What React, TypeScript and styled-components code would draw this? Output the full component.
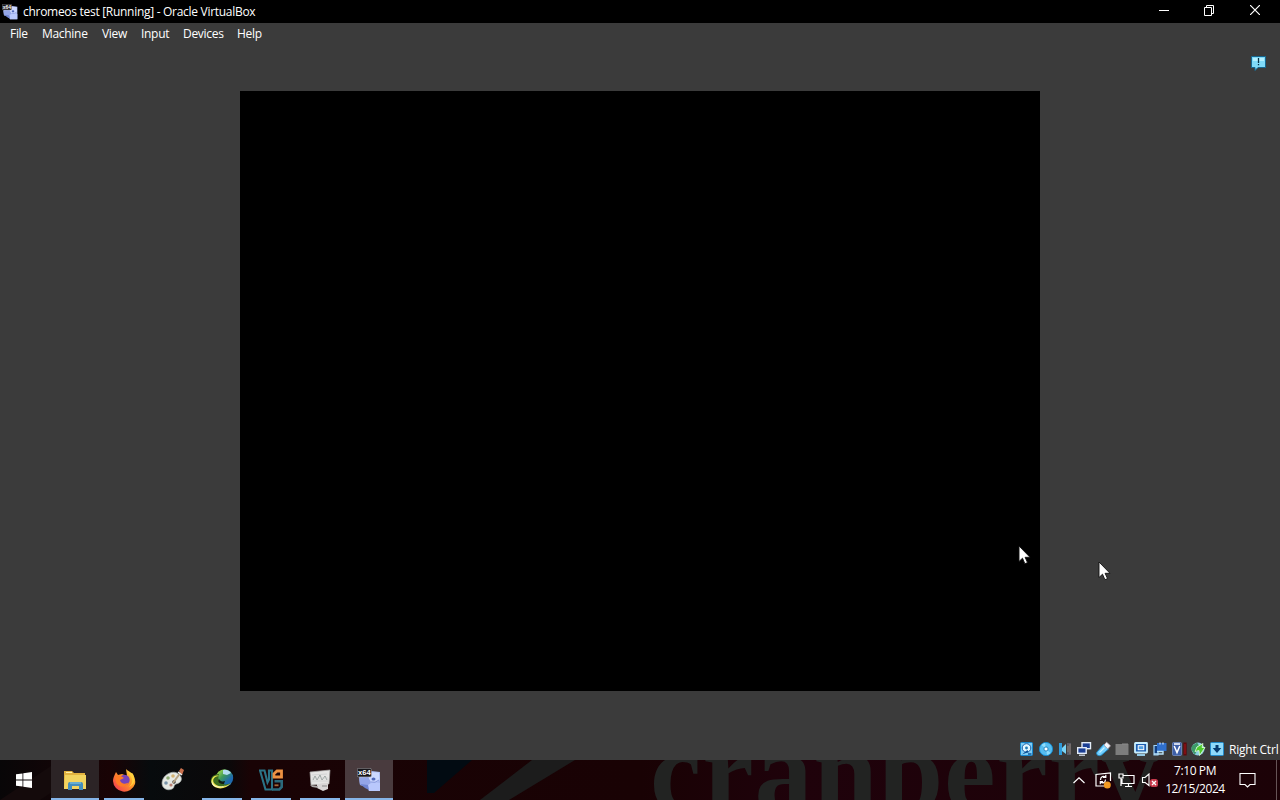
import type { ReactNode } from "react";
import styled, { createGlobalStyle } from "styled-components";

const GlobalStyle = createGlobalStyle`
  * {
    box-sizing: border-box;
  }
  body {
    margin: 0;
    background: #000;
    overflow: hidden;
  }
  svg {
    display: block;
    flex: none;
  }
`;

const Desktop = styled.div`
  position: relative;
  display: flex;
  flex-direction: column;
  width: 1280px;
  height: 800px;
  overflow: hidden;
  color: #fff;
  font-family: "Open Sans", "Noto Sans", sans-serif;
  font-size: 12px;
  user-select: none;
`;

const TitleBar = styled.header`
  display: flex;
  align-items: center;
  height: 23px;
  padding-left: 2px;
  background: #000;
`;

const Title = styled.div`
  flex: 1;
  margin-left: 5px;
  line-height: 23px;
  letter-spacing: -0.29px;
  white-space: nowrap;
`;

const WindowButtons = styled.div`
  display: flex;
  padding-right: 2px;
`;

const WindowButton = styled.div`
  display: flex;
  align-items: center;
  justify-content: center;
  width: 45.5px;
  height: 23px;
  padding-bottom: 3px;
`;

const MenuBar = styled.nav`
  display: flex;
  height: 22px;
  padding-left: 10px;
  background: #3b3b3b;
`;

const MenuItem = styled.div<{ $width: number }>`
  width: ${(p) => p.$width}px;
  line-height: 22px;
  letter-spacing: -0.3px;
  white-space: nowrap;
`;

const Machine = styled.main`
  display: flex;
  flex: 1;
  justify-content: center;
  padding-top: 46px;
  background: #3b3b3b;
`;

const Side = styled.div`
  display: flex;
  flex: 1;
  justify-content: flex-end;
  margin-top: -36px;
  padding-right: 13px;
`;

const Screen = styled.div`
  width: 800px;
  height: 600px;
  background: #000;
`;

const StatusBar = styled.footer`
  display: flex;
  align-items: center;
  justify-content: flex-end;
  gap: 3px;
  height: 22px;
  padding-bottom: 1px;
  background: #3b3b3b;
`;

const HostKey = styled.div`
  width: 51px;
  margin-left: 1px;
  padding-top: 2px;
  line-height: 22px;
  letter-spacing: -0.2px;
  white-space: nowrap;
`;

const Taskbar = styled.div`
  position: relative;
  display: flex;
  height: 40px;
  overflow: hidden;
  background: linear-gradient(90deg, #080607 0, #120507 60px, #190305 110px, #070b0d 150px, #0b0809 230px, #190305 250px, #190204 640px, #1f020b 800px, #1c0207 100%);
`;

const Wallpaper = styled.div`
  position: absolute;
  inset: 0;
`;

const WallpaperText = styled.div`
  position: absolute;
  top: -54px;
  left: 650px;
  color: #222322;
  font-family: "Liberation Serif", serif;
  font-size: 116px;
  font-weight: bold;
  line-height: 132px;
  letter-spacing: 0.8px;
`;

const Tasks = styled.div`
  position: relative;
  display: flex;
  flex: 1;
  gap: 1px;
`;

const StartButton = styled.div`
  display: flex;
  align-items: center;
  justify-content: center;
  width: 48px;
  height: 40px;
  margin-right: 2px;
`;

const taskFill = {
  none: "transparent",
  hover: "#2c2426",
  active: "#493b3e",
};

const Task = styled.div<{ $running?: boolean; $state?: "hover" | "active" }>`
  display: flex;
  align-items: center;
  justify-content: center;
  width: 48px;
  height: 40px;
  background-color: ${(p) => taskFill[p.$state ?? "none"]};
  background-image: ${(p) => (p.$running ? "linear-gradient(#86b5e8, #86b5e8)" : "none")};
  background-position: bottom center;
  background-repeat: no-repeat;
  background-size: ${(p) => (p.$state ? 48 : 40)}px 2px;
`;

const Tray = styled.div`
  position: relative;
  display: flex;
  align-items: center;
  width: 208px;
`;

const TraySlot = styled.div<{ $width: number }>`
  display: flex;
  justify-content: center;
  width: ${(p) => p.$width}px;
`;

const Clock = styled.div`
  width: 64px;
  line-height: 18px;
  letter-spacing: -0.4px;
  text-align: center;
  white-space: nowrap;
`;

const ShowDesktop = styled.div`
  width: 4px;
  height: 40px;
  border-left: 1px solid #665456;
`;

const Pointer = styled.svg<{ $x: number; $y: number }>`
  position: absolute;
  left: ${(p) => p.$x}px;
  top: ${(p) => p.$y}px;
`;

function VmLogo({ size }: { size: number }) {
  return (
    <svg width={size} height={size} viewBox="0 0 24 24">
      <path d="M2 8L15 3l8 1v19H12l-2-4-7-2z" fill="#a9b8ef" />
      <path d="M12 4l10 .5.5 8-6 3-5-2z" fill="#cdd8ff" />
      <path d="M2 10l9-1 3 5-3 4-8-1z" fill="#93a5e6" />
      <path d="M11 17l5-3 7 1v8H12z" fill="#b9c8fc" />
      <path d="M3 16l8 1 1 5-4-2z" fill="#6f84d0" />
      <ellipse cx="16.5" cy="11" rx="2" ry="1.6" fill="#4f66b8" />
      <path d="M14 14q4 1.5 8-2" fill="none" stroke="#8799dc" strokeWidth="1" />
      <rect x=".3" y=".3" width="14" height="8.6" rx="1.2" fill="#17161a" stroke="#a9a9ad" strokeWidth=".6" />
      <text x="7.3" y="7.4" textAnchor="middle" fill="#fff" fontFamily="Liberation Sans, sans-serif" fontSize="7.6" fontWeight="bold">
        x64
      </text>
    </svg>
  );
}

function StatusIcon({ children }: { children: ReactNode }) {
  return (
    <svg width="16" height="16" viewBox="0 0 16 16">
      {children}
    </svg>
  );
}

function Arrow({ x, y }: { x: number; y: number }) {
  return (
    <Pointer $x={x} $y={y} width="14" height="20" viewBox="0 0 14 20">
      <path
        d="M1 1v15.5l3.5-3.3 2.4 5.5 2.6-1.1-2.4-5.3H12z"
        fill="#fff"
        stroke="#111"
        strokeWidth=".9"
      />
    </Pointer>
  );
}

function StatusIcons() {
  return (
    <>
      {/* hard disk */}
      <StatusIcon>
        <rect x="1.5" y="1.5" width="12" height="13" rx="1" fill="#7fcdf4" stroke="#1687cf" />
        <circle cx="7.5" cy="7" r="4.3" fill="#e2f7ff" stroke="#1c5fa8" />
        <circle cx="7.5" cy="7" r="1.4" fill="#227bb6" />
        <path d="M3 13.5l5.5-4.5 1 2z" fill="#0a4f94" />
        <path d="M9 13h3.5" stroke="#0a4f94" strokeWidth="1.4" />
      </StatusIcon>
      {/* optical */}
      <StatusIcon>
        <circle cx="8" cy="8" r="6.6" fill="#56bdf0" stroke="#168ace" />
        <path d="M8 8L3.5 4a6 6 0 0 1 3.5-2zM8 8l4.5 4a6 6 0 0 1-3.5 2z" fill="#8fdcfb" />
        <circle cx="8" cy="8" r="2.1" fill="#fff" stroke="#2a86bd" />
      </StatusIcon>
      {/* audio */}
      <StatusIcon>
        <path d="M2 2h3v12H2z" fill="#2f9bdb" />
        <path d="M5 7l4-4v10L5 10z" fill="#7ad4f7" />
        <path d="M10 2h4v12h-4z" fill="#667" opacity=".7" />
        <path d="M11 5v6M13 3v10" stroke="#8b7f70" />
      </StatusIcon>
      {/* network */}
      <StatusIcon>
        <rect x="6" y="1.7" width="8.5" height="6" fill="#1c3f94" stroke="#e4edf8" strokeWidth="1.4" />
        <rect x="1.7" y="6.7" width="8.5" height="5.6" fill="#1c3f94" stroke="#e4edf8" strokeWidth="1.4" />
        <path d="M3 14.2h6" stroke="#dce6f4" strokeWidth="1.2" />
      </StatusIcon>
      {/* usb */}
      <StatusIcon>
        <path d="M2 11L8.5 3.5l5 4.5L6.5 14c-3 1.8-6-.4-4.5-3z" fill="#72cfff" stroke="#218bc5" />
        <path d="M9 4l2.6-2.8 3.9 3.6L12.8 7.8z" fill="#f3f6fb" stroke="#b9a8b3" strokeWidth=".7" />
        <path d="M4.5 11.5l5-5" stroke="#c8f0ff" strokeWidth="1.3" />
      </StatusIcon>
      {/* shared folders */}
      <StatusIcon>
        <path d="M1.5 3h13v11h-13z" fill="#7d7d7d" />
        <path d="M8 2.5h6v1H8z" fill="#8d8d8d" />
      </StatusIcon>
      {/* display */}
      <StatusIcon>
        <rect x="2" y="2" width="12" height="9.5" rx=".5" fill="#1c5db0" stroke="#c9efff" strokeWidth="1.8" />
        <rect x="5.2" y="4.7" width="5.6" height="4" fill="#4f9fe0" stroke="#fff" />
        <path d="M4 14h8" stroke="#9fd9f8" strokeWidth="1.8" />
      </StatusIcon>
      {/* recording */}
      <StatusIcon>
        <path d="M2 4.5h4V14H2z" fill="#123f80" stroke="#9fd3f5" strokeWidth="1.2" />
        <path d="M5 2h9.5v8H5z" fill="#2f6fcc" />
        <path d="M8 1.5v2M11 1.5v2" stroke="#cfe8ff" strokeWidth="1.2" />
        <path d="M5 10.5h6V13H2" fill="none" stroke="#b9e4fa" strokeWidth="1.4" />
      </StatusIcon>
      {/* cpu features */}
      <StatusIcon>
        <rect x="1.5" y="1.5" width="9" height="13" rx="1" fill="#3d5fa8" stroke="#7c98cf" strokeWidth=".7" />
        <path d="M3.2 5L6 11.5 8.8 5M3 3h6" fill="none" stroke="#fff" strokeWidth="1.5" />
        <path d="M14 1.5v13" stroke="#5c0a0d" strokeWidth="3.4" />
        <path d="M14 3v10" stroke="#a0141a" />
      </StatusIcon>
      {/* mouse integration */}
      <StatusIcon>
        <circle cx="8" cy="8" r="6.5" fill="#8ccfe0" />
        <path d="M2 5l5-3.5 2 3-3 2 1 3-2 4C2 11 1 8 2 5z" fill="#3c9968" />
        <path d="M7 6l6-3.5-1 4h3l-5.5 8-.5-5-4 1z" fill="#4fc92f" stroke="#e4ffdc" strokeWidth=".8" />
      </StatusIcon>
      {/* keyboard capture */}
      <StatusIcon>
        <rect x="1.5" y="1.5" width="13" height="13" rx="1" fill="#8edafb" stroke="#238bcb" />
        <path d="M6.5 4h3v3h2.8L8 12 3.7 7h2.8z" fill="#073c70" />
      </StatusIcon>
    </>
  );
}

function App() {
  return (
    <Desktop>
      <GlobalStyle />
      <TitleBar>
        <VmLogo size={16} />
        <Title>chromeos test [Running] - Oracle VirtualBox</Title>
        <WindowButtons>
          <WindowButton>
            <svg width="10" height="10" stroke="#fff">
              <path d="M0 5.5h10" />
            </svg>
          </WindowButton>
          <WindowButton>
            <svg width="12" height="11" fill="none" stroke="#fff">
              <path d="M.5 2.5h7v8h-7zM2.5 2.5v-2h7v8h-2" />
            </svg>
          </WindowButton>
          <WindowButton>
            <svg width="10" height="10" stroke="#fff" strokeWidth="1.2">
              <path d="M0 0l10 10M10 0L0 10" />
            </svg>
          </WindowButton>
        </WindowButtons>
      </TitleBar>

      <MenuBar>
        <MenuItem $width={32}>File</MenuItem>
        <MenuItem $width={60}>Machine</MenuItem>
        <MenuItem $width={39}>View</MenuItem>
        <MenuItem $width={42}>Input</MenuItem>
        <MenuItem $width={54}>Devices</MenuItem>
        <MenuItem $width={40}>Help</MenuItem>
      </MenuBar>

      <Machine>
        <Side />
        <Screen />
        <Side>
          <svg width="17" height="17" viewBox="0 0 17 17">
            <path d="M1.5 1.5h14v11H8l-3 3v-3H1.5z" fill="#7fdaf8" stroke="#15668f" />
            <path d="M3 3h11v3H3z" fill="#b4f0ff" />
            <path d="M8.5 3v5M8.5 9v1.2" stroke="#073146" strokeWidth="1.3" />
          </svg>
        </Side>
      </Machine>

      <StatusBar>
        <StatusIcons />
        <HostKey>Right Ctrl</HostKey>
      </StatusBar>

      <Taskbar>
        <Wallpaper>
          <svg width="1280" height="40">
            <path d="M427 0h45l-38 33h-7z" fill="#020b12" />
            <path d="M532 0h43l-66 40h-29z" fill="#1c1c1c" />
            <path d="M0 40L60 0h40L40 40z" fill="#140a0b" />
          </svg>
          <WallpaperText>cranberry</WallpaperText>
        </Wallpaper>
        <Tasks>
          <StartButton>
            <svg width="16" height="16" viewBox="0 0 16 16" fill="#fff">
              <path d="M0 2.3L6.5 1.4v6.2H0zM7.3 1.3L16 0v7.6H7.3zM0 8.4h6.5v6.2L0 13.7zM7.3 8.4H16V16l-8.7-1.3z" />
            </svg>
          </StartButton>
          <Task $running $state="hover">
            <svg width="24" height="24" viewBox="0 0 24 24">
              <path d="M1 3h8l2 2h11v16H1z" fill="#e2b33f" />
              <path d="M2 7h21v14H1z" fill="#f2d45f" />
              <path d="M3 4h6v1H3z" fill="#fff0a5" />
              <path d="M5 22v-6q0-2 2-2h11q2 0 2 2v6h-4v-4H9v4z" fill="#438dbb" />
              <path d="M7 14h11v2H7z" fill="#66add0" />
            </svg>
          </Task>
          <Task $running>
            <svg width="24" height="24" viewBox="0 0 24 24">
              <defs>
                <linearGradient id="fox" x1="1" y1="0" x2="0" y2="1">
                  <stop offset="0" stopColor="#ffe84c" />
                  <stop offset=".45" stopColor="#ff9326" />
                  <stop offset="1" stopColor="#f02b5b" />
                </linearGradient>
              </defs>
              <path d="M4 4l2 3 4-1 5 2-1-7 5 5 1-1c2 3 4 7 3 11A11.3 11.3 0 0 1 1 13c0-3 1-5 3-9z" fill="url(#fox)" />
              <circle cx="12.5" cy="12" r="5.2" fill="#7543ba" />
              <path d="M3 9c3-3 6-1 9 1l-4 2c1 5 7 4 9 2-3 7-12 5-13 0z" fill="#ff7a25" />
              <path d="M15 2l3 5q5 7-1 12 8-4 4-13z" fill="#ffcf3d" />
            </svg>
          </Task>
          <Task>
            <svg width="24" height="24" viewBox="0 0 24 24">
              <path d="M16 5c-6-3-15 3-15 10 0 6 6 8 10 6 3-1 1-4 4-5 6-1 8-7 1-11z" fill="#e6e9e4" stroke="#a5aaa7" strokeWidth=".7" />
              <circle cx="7" cy="10" r="1.8" fill="#8fac76" />
              <circle cx="12" cy="8" r="1.8" fill="#d4b374" />
              <circle cx="5" cy="15" r="1.8" fill="#7994aa" />
              <circle cx="10" cy="17" r="1.6" fill="#b88173" />
              <circle cx="13" cy="14" r="1.7" fill="#28272a" />
              <path d="M12 15l8-11" stroke="#b7a383" strokeWidth="2" />
              <path d="M18 3l2-3 3 2-2 5z" fill="#c8704e" />
              <path d="M17 4l4 3" stroke="#eee" strokeWidth="1.5" />
            </svg>
          </Task>
          <Task $running>
            <svg width="24" height="24" viewBox="0 0 24 24">
              <defs>
                <linearGradient id="globe" x1="0" y1="0" x2="1" y2="1">
                  <stop offset=".1" stopColor="#a5dc4a" />
                  <stop offset=".4" stopColor="#3f9a5a" />
                  <stop offset=".7" stopColor="#1d6ab0" />
                </linearGradient>
              </defs>
              <circle cx="14.5" cy="10" r="8.7" fill="url(#globe)" />
              <path d="M13 2q5-1 8 3l-4 2-4-1z" fill="#b4dcf0" />
              <path d="M9 6C3 6 0 10 1 14c2 6 12 8 20 1-4 2-8 2-11-1-2-2-2-4-1-8z" fill="#3a6b1f" />
              <path d="M9 8c-5 0-7 4-5 7 4 5 12 4 17 0-5 7-16 7-19 1C0 11 4 6 9 8z" fill="#f0e64f" />
              <path d="M2 12c0 7 8 8 14 5-6 5-16 2-14-5z" fill="#f6f7e0" />
              <path d="M9 11c1 2 3 3 6 2l-1 3c-4 0-7-2-5-5z" fill="#121c12" />
            </svg>
          </Task>
          <Task $running>
            <svg width="24" height="24" viewBox="0 0 24 24" fill="none">
              <path d="M1 2.5h4.5l3 12 1.5-3v-9h3v19H6.5z" stroke="#2b7386" strokeWidth="2.1" />
              <path d="M15 9V5.8L18 3h4.5v6z" stroke="#ec9142" strokeWidth="2.8" />
              <path d="M15.5 13.3h7.2V19l-2.4 2.5H13" stroke="#2b6a7c" strokeWidth="2.6" />
              <path d="M15.5 17.3h4" stroke="#a3693a" strokeWidth="1.8" />
            </svg>
          </Task>
          <Task $running>
            <svg width="24" height="24" viewBox="0 0 24 24">
              <path d="M2 4l20-2-1 14-18 1z" fill="#e5e5e4" stroke="#a5a5a4" strokeWidth=".7" />
              <path d="M5 12l2-4 2 4 3-5 2 5 3-4 2 4" fill="none" stroke="#9aa4a1" />
              <path d="M4 7l15-1M4 10h16M4 13h16" stroke="#c6caca" strokeWidth=".6" />
              <path d="M9 16l11-1v6l-5 2-6-3z" fill="#d8d6d6" />
              <path d="M14 18h5" stroke="#888" />
              <path d="M2 17l8 1v2l-6-1z" fill="#aaa8a8" />
            </svg>
          </Task>
          <Task $running $state="active">
            <VmLogo size={24} />
          </Task>
        </Tasks>

        <Tray>
          <TraySlot $width={22}>
            <svg width="12" height="7" fill="none" stroke="#fff" strokeWidth="1.2">
              <path d="M.5 6L6 .8 11.5 6" />
            </svg>
          </TraySlot>
          <TraySlot $width={26}>
            <svg width="18" height="18" viewBox="0 0 18 18" fill="none" stroke="#fff" strokeWidth="1.2">
              <path d="M10 15H2V3.5L16.5 2v8" />
              <path d="M6.5 9c0-4 3-4 5-3M11.8 3.8v2.6H9M11.5 8.5c0 3.5-3 4-5 2.5M6.3 13.2v-2.6H9" />
              <circle cx="13.3" cy="14" r="3.5" fill="#f29a22" stroke="none" />
            </svg>
          </TraySlot>
          <TraySlot $width={21}>
            <svg width="17" height="16" viewBox="0 0 17 16" fill="none" stroke="#fff" strokeWidth="1.2">
              <path d="M5 3.5h11v8H4V7M7 14.5h7M10.5 12v2.5M1 2h4v4H1zM3 6v8" />
            </svg>
          </TraySlot>
          <TraySlot $width={26}>
            <svg width="18" height="16" viewBox="0 0 18 16">
              <path d="M1.5 5.5v5h2.7L8 13.5V2L4 5.5z" fill="none" stroke="#fff" strokeWidth="1.1" />
              <rect x="9" y="7" width="8" height="8" rx="2.5" fill="#c83a4c" />
              <path d="M11 9l4 4m0-4l-4 4" stroke="#fff" strokeWidth="1.3" />
            </svg>
          </TraySlot>
          <Clock>
            7:10 PM
            <br />
            12/15/2024
          </Clock>
          <TraySlot $width={40}>
            <svg width="17" height="17" viewBox="0 0 17 17" fill="none" stroke="#fff" strokeWidth="1.1">
              <path d="M1 1.5h15v11h-5L8.5 15 6 12.5H1z" />
            </svg>
          </TraySlot>
        </Tray>
        <ShowDesktop />
      </Taskbar>

      <Arrow x={1018} y={545} />
      <Arrow x={1098} y={561} />
    </Desktop>
  );
}

export default App;
